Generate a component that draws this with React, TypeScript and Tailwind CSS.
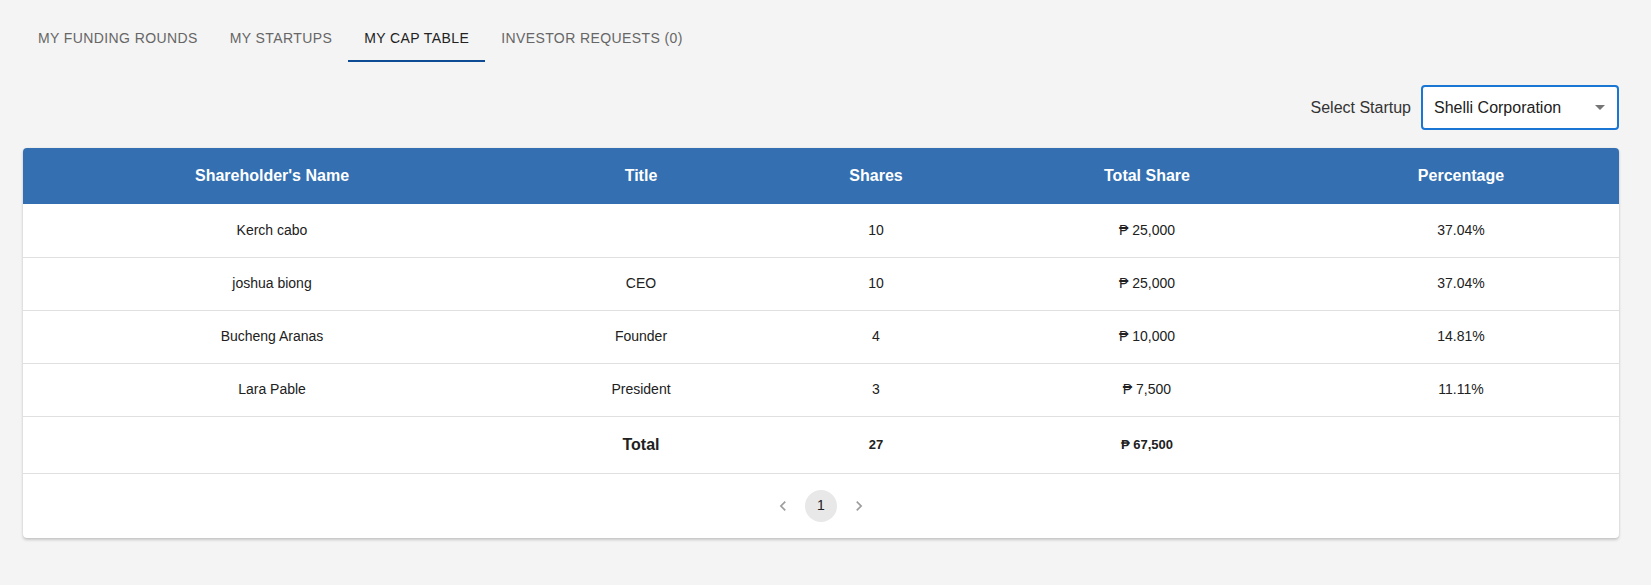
import React from 'react';

const tabs = ['My Funding Rounds', 'My Startups', 'My Cap Table', 'Investor Requests (0)'];

const rows = [
  { name: 'Kerch cabo', title: '', shares: 10, total: '₱ 25,000', pct: '37.04%' },
  { name: 'joshua biong', title: 'CEO', shares: 10, total: '₱ 25,000', pct: '37.04%' },
  { name: 'Bucheng Aranas', title: 'Founder', shares: 4, total: '₱ 10,000', pct: '14.81%' },
  { name: 'Lara Pable', title: 'President', shares: 3, total: '₱ 7,500', pct: '11.11%' },
];

const Chevron = ({ dir }: { dir: 'left' | 'right' }) => (
  <svg viewBox="0 0 24 24" className="w-5 h-5 fill-[#9e9e9e]">
    {dir === 'left' ? (
      <path d="M15.41 7.41 14 6l-6 6 6 6 1.41-1.41L10.83 12z" />
    ) : (
      <path d="M10 6 8.59 7.41 13.17 12l-4.58 4.59L10 18l6-6z" />
    )}
  </svg>
);

const App = () => {
  return (
    <div className="min-h-screen bg-[#f4f4f4] pl-[23px] pr-[32px] pt-[14px] font-['Liberation_Sans',Arial,sans-serif] text-[#212121]">
      <div className="flex h-12 -ml-px">
        {tabs.map((t, i) => (
          <div
            key={t}
            className={`relative flex items-center px-4 text-[14px] uppercase tracking-[0.4px] ${
              i === 2 ? 'text-[#222]' : 'text-[#666]'
            }`}
          >
            {t}
            {i === 2 && <div className="absolute left-0 right-0 bottom-0 h-[2px] bg-[#0d4b95]" />}
          </div>
        ))}
      </div>

      <div className="mt-[23px] flex justify-end items-center gap-[10px]">
        <span className="text-[16px] text-[#333]">Select Startup</span>
        <div className="relative w-[198px] h-[45px] rounded border-2 border-[#1976d2] bg-white pl-[11px] flex items-center text-[16px] text-[#212121]">
          Shelli Corporation
          <svg viewBox="0 0 24 24" className="absolute right-[5px] top-[8px] w-6 h-6 fill-[#757575]">
            <path d="M7 10l5 5 5-5z" />
          </svg>
        </div>
      </div>

      <div className="mt-[18px] bg-white rounded shadow-[0_2px_3px_rgba(0,0,0,0.18),0_0_2px_rgba(0,0,0,0.08)]">
        <table className="w-full table-fixed border-collapse text-center">
          <colgroup>
            <col className="w-[498px]" />
            <col className="w-[240px]" />
            <col className="w-[230px]" />
            <col className="w-[312px]" />
            <col />
          </colgroup>
          <thead>
            <tr className="h-[56px] text-white text-[16px] font-bold">
              <th className="bg-[#336fb1] rounded-tl">Shareholder's Name</th>
              <th className="bg-[#336fb1]">Title</th>
              <th className="bg-[#336fb1]">Shares</th>
              <th className="bg-[#336fb1]">Total Share</th>
              <th className="bg-[#336fb1] rounded-tr">Percentage</th>
            </tr>
          </thead>
          <tbody className="text-[14px]">
            {rows.map((r) => (
              <tr key={r.name} className="h-[53px] border-b border-[#e0e0e0]">
                <td>{r.name}</td>
                <td>{r.title}</td>
                <td>{r.shares}</td>
                <td>{r.total}</td>
                <td>{r.pct}</td>
              </tr>
            ))}
            <tr className="h-[57px] border-b border-[#e0e0e0] font-bold">
              <td />
              <td className="text-[16px]">Total</td>
              <td className="text-[13px]">27</td>
              <td className="text-[13px]">₱ 67,500</td>
              <td />
            </tr>
          </tbody>
        </table>
        <div className="h-[64px] flex items-center justify-center gap-[6px]">
          <button className="w-8 h-8 flex items-center justify-center">
            <Chevron dir="left" />
          </button>
          <button className="w-8 h-8 rounded-full bg-[#e8e8e8] text-[14px] text-[#212121]">1</button>
          <button className="w-8 h-8 flex items-center justify-center">
            <Chevron dir="right" />
          </button>
        </div>
      </div>
    </div>
  );
};

export default App;
